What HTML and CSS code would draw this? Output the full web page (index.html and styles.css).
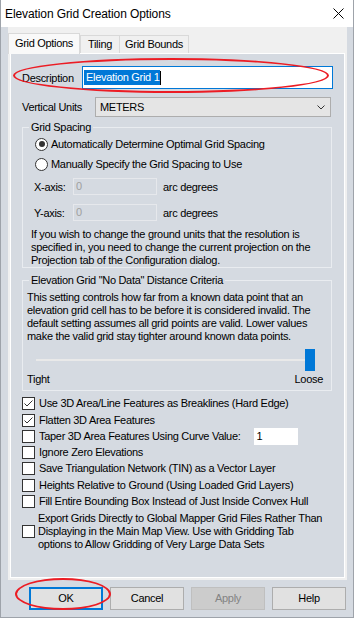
FILE: index.html
```html
<!DOCTYPE html>
<html lang="en">
<head>
    <meta charset="UTF-8">
    <title>Elevation Grid Creation Options</title>
    <link rel="stylesheet" href="styles.css">
</head>
<body>
<div class="window">
    <div class="titlebar">
        <span class="title">Elevation Grid Creation Options</span>
        <svg class="close" width="11" height="11" viewBox="0 0 11 11">
            <path d="M0.5 0.5L10.5 10.5M10.5 0.5L0.5 10.5" stroke="#000" stroke-width="1" fill="none"/>
        </svg>
    </div>

    <div class="tabctl">
        <ul class="tabs">
            <li class="tab selected">Grid Options</li>
            <li class="tab tab-tiling">Tiling</li>
            <li class="tab tab-bounds">Grid Bounds</li>
        </ul>

        <div class="page">
            <div class="row-desc">
                <span class="lbl-desc">Description</span>
                <div class="textbox"><span class="sel">Elevation Grid 1</span><span class="caret"></span></div>
            </div>

            <div class="row-units">
                <span class="lbl-units">Vertical Units</span>
                <div class="combo">
                    <span>METERS</span>
                    <svg width="8" height="5" viewBox="0 0 8 5">
                        <path d="M0.5 0.5L4 4L7.5 0.5" stroke="#333" stroke-width="1" fill="none"/>
                    </svg>
                </div>
            </div>

            <fieldset class="group group-spacing">
                <legend>Grid Spacing</legend>
                <div class="radio-row"><span class="radio checked"></span>Automatically Determine Optimal Grid Spacing</div>
                <div class="radio-row"><span class="radio"></span>Manually Specify the Grid Spacing to Use</div>
                <div class="axis-row">
                    <span class="axis-lbl">X-axis:</span>
                    <span class="axis-input">0</span>
                    <span>arc degrees</span>
                </div>
                <div class="axis-row axis-y">
                    <span class="axis-lbl">Y-axis:</span>
                    <span class="axis-input">0</span>
                    <span>arc degrees</span>
                </div>
                <p class="note">If you wish to change the ground units that the resolution is<br>
                    specified in, you need to change the current projection on the<br>
                    Projection tab of the Configuration dialog.</p>
            </fieldset>

            <fieldset class="group group-nodata">
                <legend>Elevation Grid &quot;No Data&quot; Distance Criteria</legend>
                <p class="note2">This setting controls how far from a known data point that an<br>
                    elevation grid cell has to be before it is considered invalid. The<br>
                    default setting assumes all grid points are valid. Lower values<br>
                    make the valid grid stay tighter around known data points.</p>
                <div class="slider">
                    <div class="track"></div>
                    <div class="thumb"></div>
                </div>
                <div class="slider-labels">
                    <span>Tight</span>
                    <span>Loose</span>
                </div>
            </fieldset>

            <ul class="checks">
                <li class="check-row"><span class="box"><svg width="11" height="11" viewBox="0 0 11 11"><path d="M1.5 5.5L4 8L9.5 2.5" stroke="#333" stroke-width="1" fill="none"/></svg></span>Use 3D Area/Line Features as Breaklines (Hard Edge)</li>
                <li class="check-row"><span class="box"><svg width="11" height="11" viewBox="0 0 11 11"><path d="M1.5 5.5L4 8L9.5 2.5" stroke="#333" stroke-width="1" fill="none"/></svg></span>Flatten 3D Area Features</li>
                <li class="check-row"><span class="box"></span>Taper 3D Area Features Using Curve Value:<span class="curve">1</span></li>
                <li class="check-row"><span class="box"></span>Ignore Zero Elevations</li>
                <li class="check-row"><span class="box"></span>Save Triangulation Network (TIN) as a Vector Layer</li>
                <li class="check-row"><span class="box"></span>Heights Relative to Ground (Using Loaded Grid Layers)</li>
                <li class="check-row"><span class="box"></span>Fill Entire Bounding Box Instead of Just Inside Convex Hull</li>
                <li class="check-multi"><span class="box"></span><span>Export Grids Directly to Global Mapper Grid Files Rather Than<br>
                    Displaying in the Main Map View. Use with Gridding Tab<br>
                    options to Allow Gridding of Very Large Data Sets</span></li>
            </ul>
        </div>
    </div>

    <div class="buttons">
        <a href="javascript:;" class="btn btn-default">OK</a>
        <a href="javascript:;" class="btn">Cancel</a>
        <a href="javascript:;" class="btn btn-disabled">Apply</a>
        <a href="javascript:;" class="btn">Help</a>
    </div>

    <div class="mark mark-desc"></div>
    <div class="mark mark-ok"></div>
</div>
</body>
</html>
```

FILE: styles.css
```css
* {
    margin: 0;
    padding: 0;
    box-sizing: border-box;
}

ul {
    list-style: none;
}

a {
    text-decoration: none;
    color: #000;
}

html, body {
    width: 354px;
    height: 618px;
    overflow: hidden;
}

body {
    font-family: "Liberation Sans", Arial, sans-serif;
    font-size: 11px;
    letter-spacing: -0.3px;
    color: #000;
    background: #d5dae1;
}

.window {
    position: relative;
    width: 354px;
    height: 618px;
    display: flex;
    flex-direction: column;
    background: #d5dae1;
    border: 1px solid #9ea3aa;
    border-top: 0;
}

/* title bar */
.titlebar {
    height: 27px;
    display: flex;
    align-items: center;
    justify-content: space-between;
    padding: 0 9px 0 4px;
    background: #fff;
}

.title {
    font-size: 12px;
    letter-spacing: -0.1px;
}

/* tab control */
.tabctl {
    height: 553px;
    margin: 0 6px 0 7px;
    padding: 0 2px 2px;
    background: #f0f0f0;
}

.tabs {
    height: 26px;
    display: flex;
    align-items: flex-end;
    margin-left: -2px;
}

.tab {
    height: 18px;
    line-height: 17px;
    text-align: center;
    background: #f0f0f0;
    border: 1px solid #d9d9d9;
    border-bottom: 0;
}

.tab.selected {
    position: relative;
    width: 72px;
    height: 21px;
    line-height: 18px;
    margin-bottom: -1px;
    background: #f9f9f9;
}

.tab-tiling {
    width: 40px;
}

.tab-bounds {
    width: 69px;
    border-left: 0;
}

.page {
    height: 525px;
    border: 1px solid #fff;
    background: #d5dae1;
}

/* description + units */
.row-desc {
    height: 23px;
    margin: 12px 11px 0;
    display: flex;
    align-items: center;
}

.lbl-desc {
    width: 60px;
}

.textbox {
    flex: 1;
    height: 23px;
    display: flex;
    align-items: center;
    padding-left: 1px;
    background: #fff;
    border: 1px solid #0078d7;
}

.sel {
    height: 15px;
    line-height: 15px;
    padding: 0 1px 0 2px;
    color: #fff;
    background: #0078d7;
}

.caret {
    width: 1px;
    height: 14px;
    background: #000;
}

.row-units {
    height: 20px;
    margin: 8px 13px 0 11px;
    display: flex;
    align-items: center;
}

.lbl-units {
    width: 73px;
}

.combo {
    flex: 1;
    height: 20px;
    display: flex;
    align-items: center;
    justify-content: space-between;
    padding: 0 5px 0 4px;
    background: #e5e5e5;
    border: 1px solid #adadad;
}

/* group boxes */
.group {
    min-width: 0;
    margin: 4px 12px 0 11px;
    border: 1px solid #e9ecf0;
}

.group legend {
    margin-left: 6px;
    padding: 0 2px;
    line-height: 13px;
}

.radio-row {
    height: 20px;
    display: flex;
    align-items: center;
    padding-left: 12px;
}

.radio {
    position: relative;
    width: 13px;
    height: 13px;
    margin-right: 3px;
    border: 1px solid #333;
    border-radius: 50%;
    background: #fff;
}

.radio.checked::after {
    content: "";
    position: absolute;
    left: 2.5px;
    top: 2.5px;
    width: 6px;
    height: 6px;
    border-radius: 50%;
    background: #333;
}

.axis-row {
    height: 17px;
    margin-top: 4px;
    display: flex;
    align-items: center;
    padding-left: 11px;
}

.axis-y {
    margin-top: 9px;
}

.axis-lbl {
    width: 39px;
}

.axis-input {
    width: 84px;
    height: 17px;
    line-height: 15px;
    margin-right: 6px;
    padding-left: 2px;
    color: #a0a0a0;
    border: 1px solid #e6e8ec;
}

.note {
    margin-top: 7px;
    padding-left: 8px;
    line-height: 13px;
    white-space: nowrap;
}

.group-nodata {
    margin-top: 6px;
    padding-bottom: 4px;
}

.note2 {
    margin-top: 4px;
    padding-left: 4px;
    line-height: 13px;
    white-space: nowrap;
}

.slider {
    height: 22px;
    margin: 6px 0 0 13px;
    width: 279px;
    display: flex;
    align-items: center;
}

.track {
    flex: 1;
    height: 2px;
    background: #e9e9e9;
}

.thumb {
    width: 10px;
    height: 22px;
    background: #0078d7;
}

.slider-labels {
    display: flex;
    justify-content: space-between;
    margin-top: 2px;
    padding: 0 8px 0 4px;
    line-height: 13px;
}

/* check boxes */
.checks {
    margin: 4px 0 0 11px;
}

.check-row {
    height: 16px;
    display: flex;
    align-items: center;
    white-space: nowrap;
}

.check-row:nth-child(2),
.check-row:nth-child(6) {
    margin-top: 1px;
}

.box {
    flex: none;
    width: 13px;
    height: 13px;
    margin-right: 4px;
    background: #fff;
    border: 1px solid #333;
}

.box svg {
    display: block;
}

.curve {
    width: 44px;
    height: 17px;
    line-height: 17px;
    margin-left: 13px;
    padding-left: 3px;
    background: #fff;
}

.check-multi {
    margin-top: 3px;
    display: flex;
    align-items: center;
    line-height: 13px;
    white-space: nowrap;
}

.check-multi .box {
    margin-right: 3px;
}

/* buttons */
.buttons {
    display: flex;
    gap: 7px;
    margin-top: 7px;
    padding-left: 28px;
}

.btn {
    width: 74px;
    height: 23px;
    line-height: 21px;
    text-align: center;
    background: #e1e1e1;
    border: 1px solid #adadad;
}

.btn-default {
    line-height: 19px;
    border: 2px solid #0078d7;
}

.btn-disabled {
    color: #838383;
    background: #cccccc;
    border-color: #bfbfbf;
}

/* red hand marks */
.mark {
    position: absolute;
    border: 2px solid #ec1c24;
    border-radius: 50%;
}

.mark-desc {
    left: 12px;
    top: 58px;
    width: 316px;
    height: 35px;
}

.mark-ok {
    left: 14px;
    top: 578px;
    width: 96px;
    height: 32px;
}
```
